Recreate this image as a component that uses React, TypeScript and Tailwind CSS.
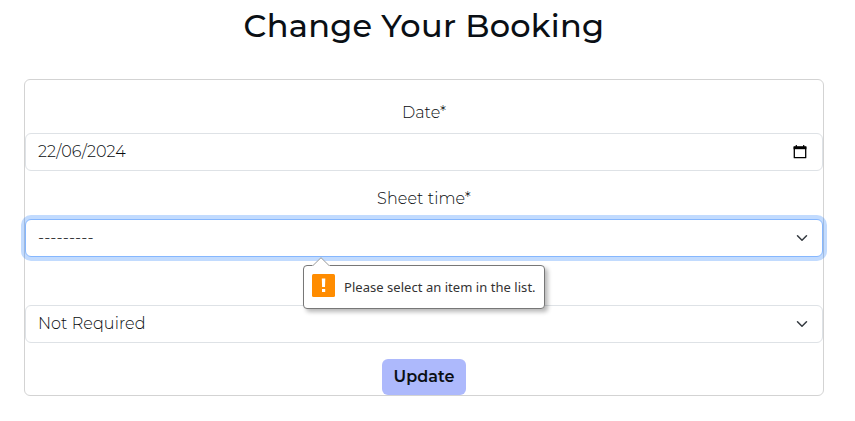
import type { ReactNode } from "react";

function Chevron() {
  return (
    <svg width="16" height="12" viewBox="0 0 16 16" preserveAspectRatio="xMidYMid meet" className="mr-3 h-3 w-4" fill="none">
      <path d="m2 5 6 6 6-6" stroke="#343a40" strokeWidth="2" strokeLinecap="round" strokeLinejoin="round" />
    </svg>
  );
}

function CalendarIcon() {
  return (
    <svg width="14" height="16" viewBox="0 0 14 16" className="mr-[15px]" fill="none">
      <path d="M1.3 3v10.7h11.4V3" stroke="#000" strokeWidth="1.3" strokeLinejoin="round" />
      <path d="M.6 2.2h12.8v3H.6z" fill="#000" />
      <path d="M3.3 1v2M10.7 1v2" stroke="#000" strokeWidth="1.2" />
    </svg>
  );
}

function Label({ children }: { children: ReactNode }) {
  return <div className="mb-2 flex h-6 items-center justify-center">{children}</div>;
}

function Control({ children, focused = false }: { children: ReactNode; focused?: boolean }) {
  return (
    <div
      className={
        "flex h-[38px] items-center justify-between rounded-md border bg-white pl-3 " +
        (focused ? "border-[#86b7fe] shadow-[0_0_0_4px_rgba(13,110,253,0.25)]" : "border-[#dee2e6]")
      }
    >
      {children}
    </div>
  );
}

function ValidationBubble() {
  return (
    <div className="absolute top-[46px] left-[278px] flex h-[44px] w-[242px] rounded-[4px] border border-[#777] bg-white pt-2 pl-2 shadow-[3px_3px_4px_rgba(0,0,0,0.28)]">
      <svg width="18" height="9" viewBox="0 0 18 9" className="absolute -top-[9px] left-[8px]" fill="none">
        <path d="M0 9 9 .7 18 9z" fill="#fff" />
        <path d="M1 8.5 9 .7l8 7.8" stroke="#999" />
      </svg>
      <svg width="23" height="23" viewBox="0 0 23 23">
        <rect width="23" height="23" rx="1.5" fill="#ff8c00" />
        <path d="M9.8 4.5h3.5l-.3 8.5h-2.9zM10 15h3.2v3H10z" fill="#fff" />
      </svg>
      <span className="ml-[9px] h-[26px] font-['Noto_Sans',sans-serif] text-[13px] leading-[26px] font-normal tracking-[0.04px] whitespace-nowrap text-[#333]">
        Please select an item in the list.
      </span>
    </div>
  );
}

export default function App() {
  return (
    <main className="h-[421px] overflow-hidden bg-white pr-[31px] pl-6 font-[Montserrat,Inter,sans-serif] text-base font-light tracking-[0.08px] text-[#080b0e]">
      <h1 className="flex h-[79px] justify-center pt-[7px] text-[32px] leading-[38px] font-medium tracking-[0.27px] text-[#0a0f14]">
        Change Your Booking
      </h1>
      <form className="flex h-[317px] flex-col rounded-md border border-[#d3d3d3] pt-[21px]">
        <Label>Date*</Label>
        <Control>
          <span>22/06/2024</span>
          <CalendarIcon />
        </Control>
        <div className="h-4" />
        <Label>Sheet time*</Label>
        <div className="relative z-10">
          <Control focused>
            <span>---------</span>
            <Chevron />
          </Control>
          <ValidationBubble />
        </div>
        <div className="h-12" />
        <Control>
          <span>Not Required</span>
          <Chevron />
        </Control>
        <button
          type="button"
          className="mt-4 h-9 w-[84px] shrink-0 self-center rounded-md bg-[#adb9fc] pb-px font-semibold tracking-normal text-[#0a0f14]"
        >
          Update
        </button>
      </form>
    </main>
  );
}
